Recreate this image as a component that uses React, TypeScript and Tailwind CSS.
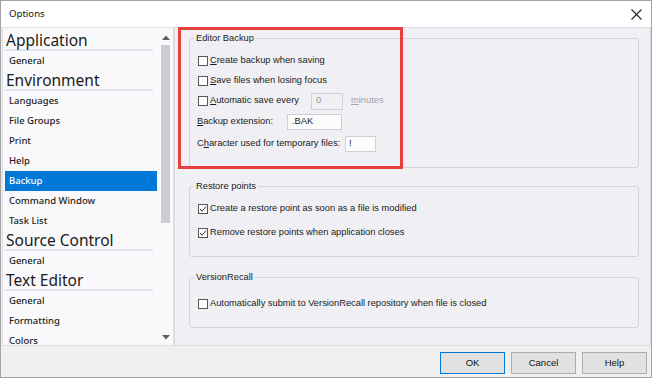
import React from "react";

const sans = "font-['Liberation_Sans',Arial,sans-serif]";
const ui = "font-['Noto_Sans','Open_Sans',sans-serif]";

function Box({ checked }: { checked?: boolean }) {
  return (
    <span className="w-[10px] h-[10px] border border-[#555] bg-white shrink-0 flex items-center justify-center">
      {checked && (
        <svg width="8" height="8" viewBox="0 0 8 8">
          <polyline points="1,4 3,6.2 7,1.5" fill="none" stroke="#333" strokeWidth="1" />
        </svg>
      )}
    </span>
  );
}

function U({ c }: { c: string }) {
  return <span className="underline underline-offset-[1px]">{c}</span>;
}

function Group({ title, className, children }: { title: string; className?: string; children: React.ReactNode }) {
  return (
    <fieldset className={`border border-[#d3d3da] rounded-[3px] pl-[8px] ${className ?? ""}`}>
      <legend className="ml-[-4px] px-[2px] leading-[12px] text-[#1a1a1a]">{title}</legend>
      {children}
    </fieldset>
  );
}

const listItems: { t: string; h?: boolean; sel?: boolean }[] = [
  { t: "Application", h: true },
  { t: "General" },
  { t: "Environment", h: true },
  { t: "Languages" },
  { t: "File Groups" },
  { t: "Print" },
  { t: "Help" },
  { t: "Backup", sel: true },
  { t: "Command Window" },
  { t: "Task List" },
  { t: "Source Control", h: true },
  { t: "General" },
  { t: "Text Editor", h: true },
  { t: "General" },
  { t: "Formatting" },
  { t: "Colors" },
];

export default function App() {
  return (
    <div className="w-[652px] h-[378px] border border-[#a3a3a3] bg-[#f0f0f0] flex flex-col overflow-hidden">
      {/* Title bar */}
      <div className={`h-[26px] shrink-0 bg-white flex items-center justify-between pl-[8px] pr-[9px] ${ui}`}>
        <span className="text-[9.6px] text-[#111]">Options</span>
        <svg width="11" height="11" viewBox="0 0 11 11">
          <path d="M0.5 0.5 L10.5 10.5 M10.5 0.5 L0.5 10.5" stroke="#222" strokeWidth="1.1" />
        </svg>
      </div>

      {/* Body */}
      <div className="h-[319px] shrink-0 flex">
        {/* Left list */}
        <div className={`ml-[1px] w-[172px] shrink-0 border border-[#dedee4] bg-[#f9f9fb] flex pl-[2px] pt-[3px] overflow-hidden ${ui}`}>
          <div className="w-[152px] shrink-0 flex flex-col">
            {listItems.map((it, i) =>
              it.h ? (
                <div
                  key={i}
                  className="h-[20px] shrink-0 border-b-2 border-[#e3e3eb] flex items-center pl-[1px] text-[15.5px] leading-[18px] text-[#1b1b1b] mr-[4px]"
                >
                  {it.t}
                </div>
              ) : (
                <div
                  key={i}
                  className={`h-[20px] shrink-0 flex items-center pl-[4px] text-[9.5px] font-medium ${
                    it.sel ? "bg-[#0078d7] text-white" : "text-[#222]"
                  }`}
                >
                  {it.t}
                </div>
              )
            )}
          </div>
          {/* scrollbar */}
          <div className="ml-[4px] w-[9px] shrink-0 flex flex-col mt-[-1px]">
            <div className="h-[14px] flex items-center justify-center">
              <svg width="8" height="5" viewBox="0 0 8 5">
                <polygon points="0,5 8,5 4,0.5" fill="#606060" />
              </svg>
            </div>
            <div className="mt-[1px] h-[178px] bg-[#cdcdd1]" />
            <div className="flex-1" />
            <div className="h-[14px] flex items-center justify-center mb-[1px]">
              <svg width="8" height="5" viewBox="0 0 8 5">
                <polygon points="0,0 8,0 4,4.5" fill="#606060" />
              </svg>
            </div>
          </div>
        </div>

        {/* Right panel */}
        <div className={`relative flex-1 border border-[#dcdce2] bg-[#f0f0f4] pl-[14px] pr-[11px] pt-[4px] flex flex-col text-[9.3px] text-[#1a1a1a] ${sans}`}>
          <Group title="Editor Backup" className="h-[136px]">
            <div className="pt-[7px] flex flex-col">
              <div className="h-[20px] flex items-center gap-[2px]">
                <Box />
                <span><U c="C" />reate backup when saving</span>
              </div>
              <div className="h-[20px] flex items-center gap-[2px]">
                <Box />
                <span><U c="S" />ave files when losing focus</span>
              </div>
              <div className="h-[20px] flex items-center gap-[2px]">
                <Box />
                <span className="w-[99px]"><U c="A" />utomatic save every</span>
                <div className="w-[32px] h-[17px] border border-[#cfcfd4] bg-[#f0f0f2] flex items-center pl-[4px] text-[#9a9a9a]">0</div>
                <span className="ml-[6px] text-[#a3a3a8]"><U c="m" />inutes</span>
              </div>
              <div className="mt-[3px] h-[16px] flex items-center">
                <span className="w-[90px] ml-[-1px]"><U c="B" />ackup extension:</span>
                <div className="w-[55px] h-[16px] border border-[#cfcfd4] bg-[#fcfcfd] flex items-center pl-[4px]">.BAK</div>
              </div>
              <div className="mt-[6px] h-[16px] flex items-center">
                <span className="w-[148px] ml-[-1px]">C<U c="h" />aracter used for temporary files:</span>
                <div className="w-[31px] h-[16px] border border-[#cfcfd4] bg-[#fcfcfd] flex items-center pl-[3px]">!</div>
              </div>
            </div>
          </Group>

          <Group title="Restore points" className="mt-[12px] h-[77px]">
            <div className="pt-[7px] flex flex-col">
              <div className="h-[20px] flex items-center gap-[2px]">
                <Box checked />
                <span>Create a restore point as soon as a file is modified</span>
              </div>
              <div className="mt-[4px] h-[20px] flex items-center gap-[2px]">
                <Box checked />
                <span>Remove restore points when application closes</span>
              </div>
            </div>
          </Group>

          <Group title="VersionRecall" className="mt-[14px] h-[57px]">
            <div className="pt-[11px] flex flex-col">
              <div className="h-[20px] flex items-center gap-[2px]">
                <Box />
                <span>Automatically submit to VersionRecall repository when file is closed</span>
              </div>
            </div>
          </Group>

          {/* annotation highlight */}
          <div className="absolute left-[3px] top-[-1px] w-[225px] h-[142px] border-[3px] border-[#e5423b] pointer-events-none" />
        </div>
      </div>

      {/* Footer */}
      <div className={`flex-1 flex justify-end items-start pt-[6px] pr-[4px] gap-[6px] text-[9.5px] text-[#111] ${sans}`}>
        <button className="w-[65px] h-[22px] bg-[#e1e1e1] border border-[#0078d7] flex items-center justify-center">OK</button>
        <button className="w-[65px] h-[22px] bg-[#e1e1e1] border border-[#adadad] flex items-center justify-center">Cancel</button>
        <button className="w-[65px] h-[22px] bg-[#e1e1e1] border border-[#adadad] flex items-center justify-center">Help</button>
      </div>
    </div>
  );
}
